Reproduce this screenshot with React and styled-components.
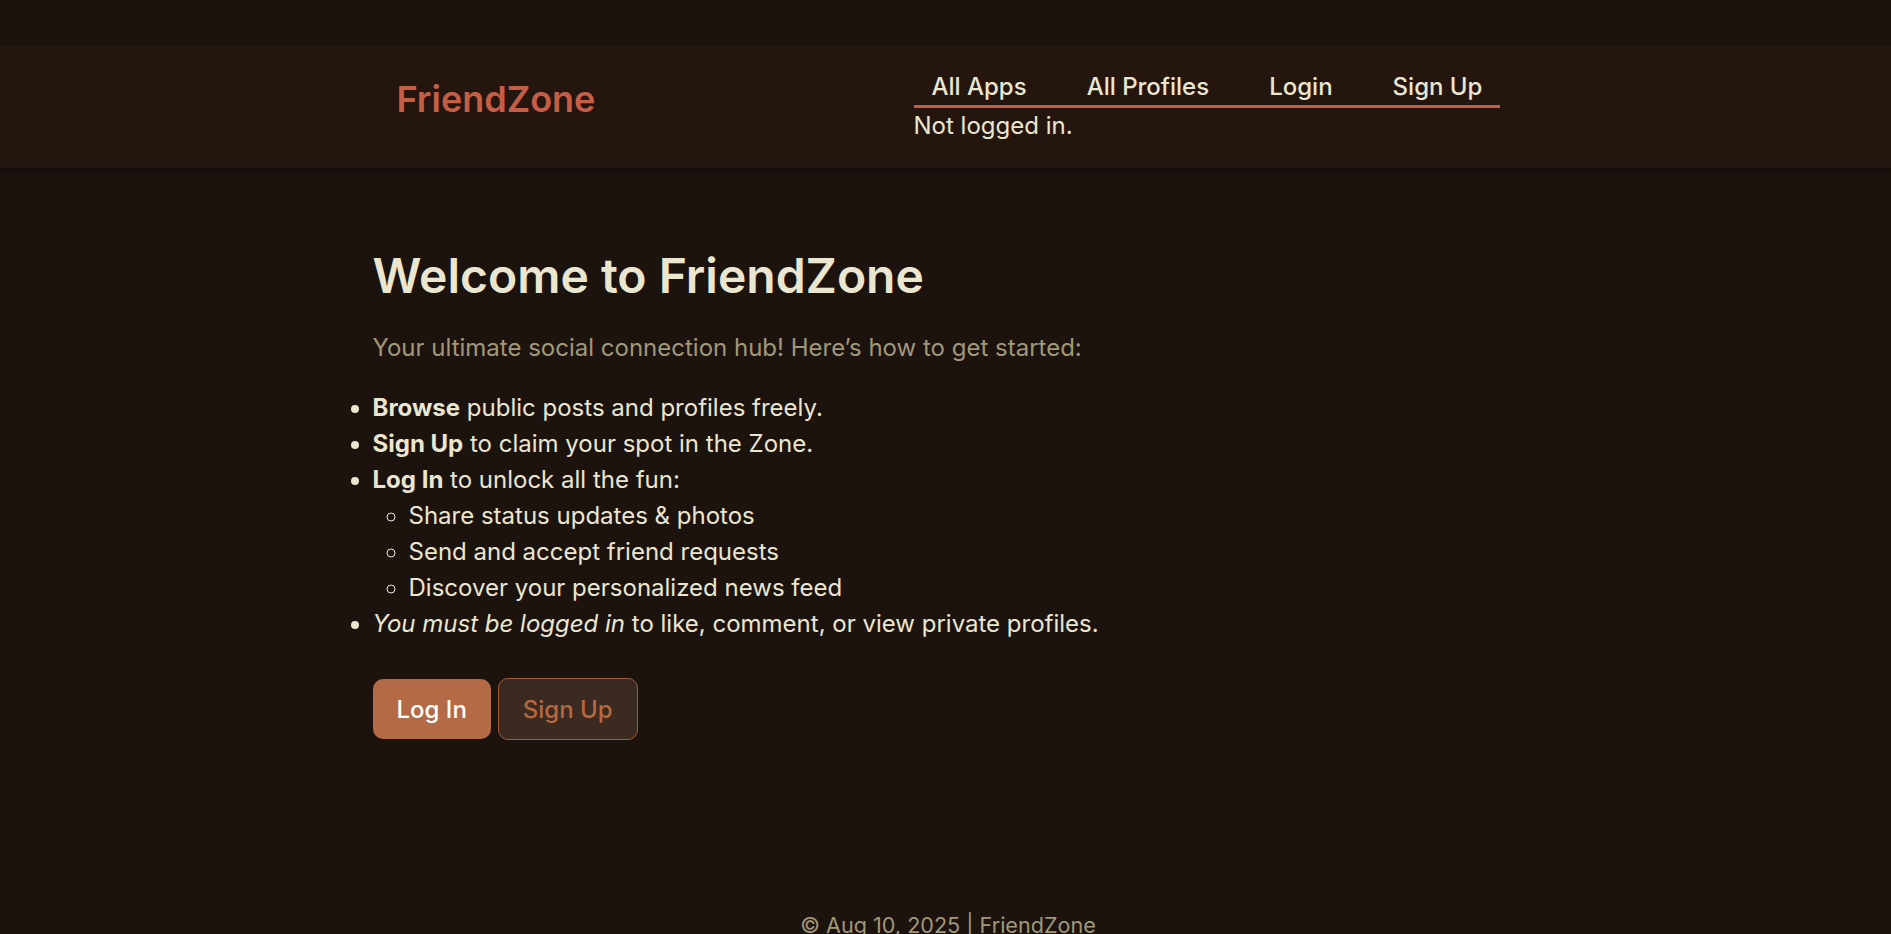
import React from "react";
import styled, { createGlobalStyle } from "styled-components";

const Global = createGlobalStyle`
  html, body { margin: 0; padding: 0; }
  body {
    background: #1c130f;
    color: #ebe6cf;
    font-family: Inter, "Noto Sans", sans-serif;
  }
`;

const Page = styled.div`
  padding-top: 45px;
`;

const Header = styled.header`
  background: #24160f;
  height: 123px;
  box-shadow: 0 2px 4px rgba(0, 0, 0, 0.45);
  position: relative;
  z-index: 1;
`;

const HeaderInner = styled.div`
  max-width: 1200px;
  margin: 0 auto;
  height: 100%;
  padding: 0 0 0 51px;
  box-sizing: border-box;
  display: grid;
  grid-template-columns: 517px auto;
  align-items: center;
`;

const Logo = styled.a`
  color: #c65d45;
  font-size: 36px;
  font-weight: 600;
  text-decoration: none;
  margin-bottom: 16px;
`;

const NavBlock = styled.div`
  display: flex;
  flex-direction: column;
  align-items: flex-start;
  margin-top: 2px;
`;

const NavList = styled.nav`
  display: flex;
  gap: 24px;
  border-bottom: 3px solid #c65a43;
`;

const NavLink = styled.a`
  color: #ebe6cf;
  font-size: 24px;
  font-weight: 500;
  line-height: 30px;
  padding: 0 18px 3px;
  text-decoration: none;
`;

const Status = styled.div`
  font-size: 24px;
  line-height: 34px;
  margin-top: 1px;
  color: #ebe6cf;
`;

const Main = styled.main`
  max-width: 1200px;
  width: 100%;
  margin: 0 auto;
  padding: 79px 27px 131px;
  box-sizing: border-box;
`;

const Title = styled.h1`
  margin: 0;
  font-size: 48px;
  line-height: 58px;
  font-weight: 600;
  color: #ebe6cf;
`;

const Lead = styled.p`
  margin: 25px 0 0;
  font-size: 24px;
  line-height: 36px;
  color: #a19878;
`;

const List = styled.ul`
  margin: ${(p) => (p.$nested ? "0" : "24px 0 0")};
  padding-left: ${(p) => (p.$nested ? "36px" : "0")};
  list-style: ${(p) => (p.$nested ? "circle" : "disc")};
  font-size: 24px;
  line-height: 36px;
  color: #ebe6cf;
`;

const Item = styled.li``;

const Actions = styled.div`
  display: flex;
  gap: 7px;
  align-items: center;
  margin-top: 36px;
`;

const Button = styled.button`
  font-family: inherit;
  font-size: 24px;
  font-weight: 500;
  height: ${(p) => (p.$primary ? "60px" : "62px")};
  padding: 0 24px;
  border-radius: 10px;
  cursor: pointer;
  background: ${(p) => (p.$primary ? "#b56a47" : "#3b2a22")};
  color: ${(p) => (p.$primary ? "#ffffff" : "#b8673f")};
  border: ${(p) => (p.$primary ? "none" : "1px solid #a85c3a")};
`;

const Footer = styled.footer`
  text-align: center;
  font-size: 21.6px;
  line-height: 28px;
  color: #a19878;
  padding: 40px 0 40px 5px;
`;

export default function App() {
  return (
    <>
      <Global />
      <Page>
        <Header>
          <HeaderInner>
            <Logo href="#">FriendZone</Logo>
            <NavBlock>
              <NavList>
                <NavLink href="#">All Apps</NavLink>
                <NavLink href="#">All Profiles</NavLink>
                <NavLink href="#">Login</NavLink>
                <NavLink href="#">Sign Up</NavLink>
              </NavList>
              <Status>Not logged in.</Status>
            </NavBlock>
          </HeaderInner>
        </Header>
        <Main>
          <Title>Welcome to FriendZone</Title>
          <Lead>Your ultimate social connection hub! Here’s how to get started:</Lead>
          <List>
            <Item>
              <strong>Browse</strong> public posts and profiles freely.
            </Item>
            <Item>
              <strong>Sign Up</strong> to claim your spot in the Zone.
            </Item>
            <Item>
              <strong>Log In</strong> to unlock all the fun:
              <List $nested>
                <Item>Share status updates &amp; photos</Item>
                <Item>Send and accept friend requests</Item>
                <Item>Discover your personalized news feed</Item>
              </List>
            </Item>
            <Item>
              <em>You must be logged in</em> to like, comment, or view private profiles.
            </Item>
          </List>
          <Actions>
            <Button $primary>Log In</Button>
            <Button>Sign Up</Button>
          </Actions>
        </Main>
        <Footer>© Aug 10, 2025 | FriendZone</Footer>
      </Page>
    </>
  );
}
